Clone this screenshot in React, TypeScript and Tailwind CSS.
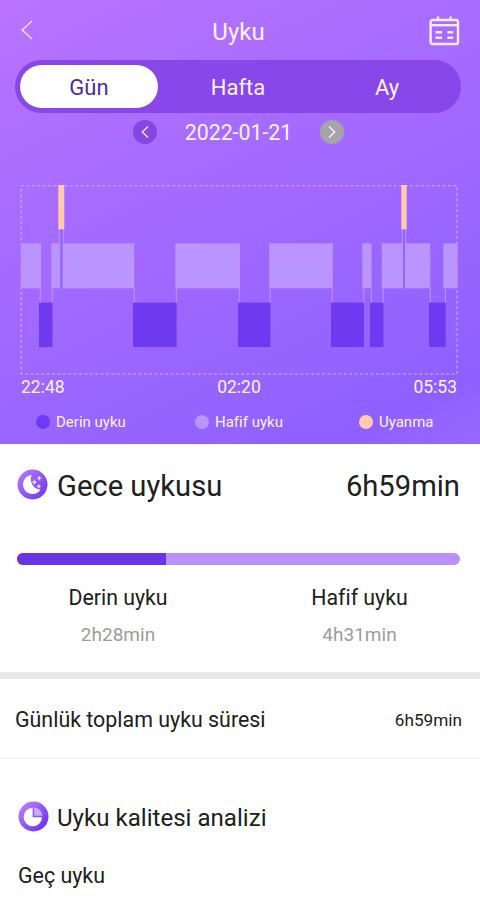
import React from "react";

interface Segment {
  from: number;
  to: number;
}

const lightSleep: Segment[] = [
  { from: 21, to: 41 },
  { from: 51.3, to: 60.3 },
  { from: 62.6, to: 134.2 },
  { from: 175.3, to: 240 },
  { from: 269.2, to: 332.8 },
  { from: 362.2, to: 371.6 },
  { from: 381.8, to: 403.2 },
  { from: 404.8, to: 430.3 },
  { from: 443.3, to: 457.5 },
];

const deepSleep: Segment[] = [
  { from: 39, to: 52.5 },
  { from: 133, to: 176.6 },
  { from: 238, to: 270.4 },
  { from: 331, to: 364 },
  { from: 370, to: 383.4 },
  { from: 429, to: 445.6 },
];

const awake: Segment[] = [
  { from: 58.3, to: 64.3 },
  { from: 401.3, to: 406.7 },
];

const SleepChart: React.FC = () => (
  <svg className="ml-5 block h-[192px] w-[438px]" viewBox="20 184 438 192">
    <rect
      x="21.2"
      y="185.8"
      width="435.8"
      height="188.2"
      fill="none"
      stroke="#cdb0ff"
      strokeWidth="1.1"
      strokeDasharray="3 2.4"
    />
    {lightSleep.map((s) => (
      <rect key={s.from} x={s.from} y="243.3" width={s.to - s.from} height="45" fill="#bb95ff" />
    ))}
    {deepSleep.map((s) => (
      <g key={s.from}>
        <path
          d={`M${s.from + 1.3} 288V303M${s.to - 0.2} 288V303`}
          stroke="#b58eff"
          strokeWidth="1.2"
        />
        <rect x={s.from} y="302.7" width={s.to - s.from} height="44.3" fill="#6e39f1" />
      </g>
    ))}
    {awake.map((s) => (
      <g key={s.from}>
        <path
          d={`M${s.from + 1.2} 229V243.5M${s.to - 1} 229V243.5`}
          stroke="#b58eff"
          strokeWidth="1.2"
        />
        <path
          d={`M${(s.from + s.to) / 2 + 0.1} 229V288`}
          stroke="#9462f2"
          strokeWidth="1.6"
        />
        <rect x={s.from} y="185" width={s.to - s.from} height="44.3" fill="#ffcbac" />
      </g>
    ))}
  </svg>
);

const CalendarIcon: React.FC = () => (
  <svg className="h-[30px] w-8" viewBox="0 0 32 30" fill="none" stroke="#f6eaff">
    <rect x="2.6" y="4" width="27.4" height="24" rx="2" strokeWidth="2.4" />
    <path d="M2.6 9.2H30" strokeWidth="2.4" />
    <path d="M10 0.5V4.5M22.6 0.5V4.5" strokeWidth="2.4" />
    <path d="M7.5 16.2H14M19.4 16.2H25.2M7.5 21.8H14M19.4 21.8H25.2" strokeWidth="2.6" />
  </svg>
);

const MoonIcon: React.FC = () => (
  <svg className="h-[31px] w-[31px]" viewBox="0 0 31 31">
    <defs>
      <linearGradient id="moon" x1="0" y1="0" x2="1" y2="1">
        <stop offset="0.1" stopColor="#b278fb" />
        <stop offset="0.9" stopColor="#733af0" />
      </linearGradient>
    </defs>
    <circle cx="15.5" cy="15.5" r="15" fill="url(#moon)" />
    <path
      d="M14.6 5.9A9.6 9.6 0 1 0 23.6 20.8A10.8 10.8 0 0 1 14.6 5.9Z"
      fill="#fff"
    />
    <g fill="#eadbff">
      <path d="M22.3 6.7L23.2 8.3L24.8 9.2L23.2 10.1L22.3 11.7L21.4 10.1L19.8 9.2L21.4 8.3Z" />
      <path d="M17.4 10.3L18.4 12.2L20.2 13.2L18.4 14.2L17.4 16.1L16.4 14.2L14.6 13.2L16.4 12.2Z" />
      <path d="M21.8 14.8L22.7 16.4L24.3 17.3L22.7 18.2L21.8 19.8L20.9 18.2L19.3 17.3L20.9 16.4Z" />
    </g>
  </svg>
);

const PieIcon: React.FC = () => (
  <svg className="h-[31px] w-[31px]" viewBox="0 0 31 31">
    <defs>
      <linearGradient id="pie" x1="0" y1="0" x2="1" y2="1">
        <stop offset="0.1" stopColor="#b77eff" />
        <stop offset="0.9" stopColor="#6a2ff5" />
      </linearGradient>
    </defs>
    <circle cx="15.5" cy="15.5" r="15" fill="url(#pie)" />
    <path d="M14.6 6.8A9.2 9.2 0 1 0 24 16.3H14.6Z" fill="#fff" />
    <path d="M16.2 6.4A8.6 8.6 0 0 1 24.3 14.8H16.2Z" fill="#cda9ff" />
  </svg>
);

interface LegendProps {
  label: string;
  className: string;
  dot: string;
}

const Legend: React.FC<LegendProps> = ({ label, className, dot }) => (
  <div className={`flex items-center ${className}`}>
    <span className={`mr-[6px] h-[14px] w-[14px] shrink-0 rounded-full ${dot}`} />
    <span>{label}</span>
  </div>
);

const App: React.FC = () => {
  return (
    <div className="h-[900px] w-[480px] overflow-hidden bg-white font-['Roboto',sans-serif] whitespace-nowrap text-[#202020] [font-variant-ligatures:none]">
      <section className="h-[444px] bg-linear-[155deg,#b973ff_0%,#a66bff_38%,#9b66ff_62%,#8f60ff_90%,#9869ff_100%] text-[#faf3ff]">
        <header className="flex h-[60px] items-center pt-[3px]">
          <div className="w-[180px] pl-[21px]">
            <svg className="-mt-[3px] h-5 w-3" viewBox="0 0 12 20" fill="none" stroke="#efd9ff" strokeWidth="1.6">
              <path d="M11 1L1.2 10L11 19" />
            </svg>
          </div>
          <h1 className="w-[117px] text-center text-2xl">Uyku</h1>
          <div className="flex flex-1 justify-end pr-[20px] pb-[2px]">
            <CalendarIcon />
          </div>
        </header>

        <nav className="ml-[15px] flex h-[53px] w-[446px] items-center rounded-full bg-[#8946e9] pl-[5px] text-[22px]">
          <button className="h-[43px] w-[138px] rounded-full bg-white pt-px text-[#4c2bab]">Gün</button>
          <button className="w-[160px] pt-px">Hafta</button>
          <button className="w-[138px] pt-px">Ay</button>
        </nav>

        <div className="flex h-[38px] items-center pl-[133px]">
          <button className="flex h-6 w-6 items-center justify-center rounded-full bg-[#8646e2]">
            <svg className="h-3 w-2" viewBox="0 0 8 12" fill="none" stroke="#f0ddff" strokeWidth="1.5">
              <path d="M7 0.5L1.3 6L7 11.5" />
            </svg>
          </button>
          <span className="w-[163px] pt-px text-center text-[21.3px]">2022-01-21</span>
          <button className="flex h-6 w-6 items-center justify-center rounded-full bg-[#a5a5a8]">
            <svg className="h-3 w-2" viewBox="0 0 8 12" fill="none" stroke="#f4efff" strokeWidth="1.5">
              <path d="M1 0.5L6.7 6L1 11.5" />
            </svg>
          </button>
        </div>

        <div className="pt-[33px]">
          <SleepChart />
        </div>
        <div className="flex h-[22px] items-center justify-between pr-[23px] pl-[21px] text-[17.5px]">
          <span>22:48</span>
          <span>02:20</span>
          <span>05:53</span>
        </div>
        <div className="flex h-[48px] items-center pl-[36px] text-[15px]">
          <Legend label="Derin uyku" className="w-[159px]" dot="bg-[#6e39f1]" />
          <Legend label="Hafif uyku" className="w-[164px]" dot="bg-[#bb95ff]" />
          <Legend label="Uyanma" className="" dot="bg-[#ffcbac]" />
        </div>
      </section>

      <section className="h-[228px]">
        <div className="flex h-[84px] items-center pr-[20px] pl-[17px] text-[29.2px]">
          <div className="-mt-[3px]">
            <MoonIcon />
          </div>
          <h2 className="ml-[9px] flex-1 pt-px">Gece uykusu</h2>
          <span className="pt-px">6h59min</span>
        </div>
        <div className="mt-[25px] ml-[17px] flex h-3 w-[443px] overflow-hidden rounded-full bg-[#bb91ff]">
          <div className="w-[149px] bg-[#6933e8]" />
        </div>
        <div className="mt-[16px] flex text-center">
          <div className="w-[236px] shrink-0">
            <p className="text-[21.3px] leading-[33px]">Derin uyku</p>
            <p className="mt-[5px] text-[19px] leading-[32px] text-[#9c9c9c]">2h28min</p>
          </div>
          <div className="w-[247px] shrink-0">
            <p className="text-[21.3px] leading-[33px]">Hafif uyku</p>
            <p className="mt-[5px] text-[19px] leading-[32px] text-[#9c9c9c]">4h31min</p>
          </div>
        </div>
      </section>

      <div className="h-[7px] bg-[#e9e9e9]" />

      <section className="flex h-[80px] items-center justify-between border-b-2 border-[#f5f5f5] pt-[5px] pr-[18px] pl-[15px]">
        <span className="text-[21.4px]">Günlük toplam uyku süresi</span>
        <span className="text-[17.2px]">6h59min</span>
      </section>

      <section>
        <div className="mt-[34px] flex h-[48px] items-center pl-[18px]">
          <div className="-mt-px">
            <PieIcon />
          </div>
          <h2 className="ml-[8px] pt-[3px] text-[24.1px]">Uyku kalitesi analizi</h2>
        </div>
        <p className="mt-[19px] ml-[18px] text-[21.4px] leading-[32px]">Geç uyku</p>
      </section>
    </div>
  );
};

export default App;
